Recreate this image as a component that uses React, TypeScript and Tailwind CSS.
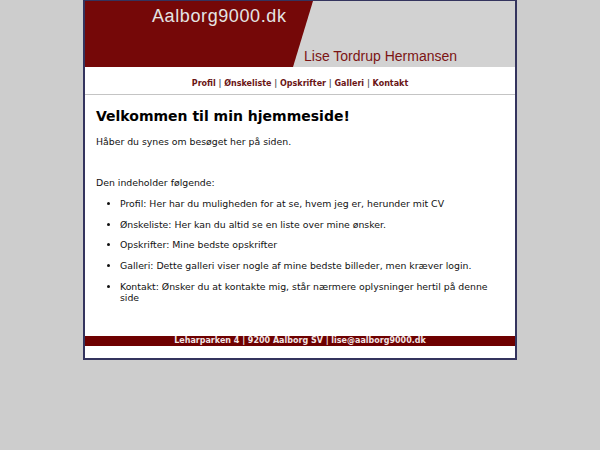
import React from "react";

const menu = ["Profil", "Ønskeliste", "Opskrifter", "Galleri", "Kontakt"];

const items = [
  "Profil: Her har du muligheden for at se, hvem jeg er, herunder mit CV",
  "Ønskeliste: Her kan du altid se en liste over mine ønsker.",
  "Opskrifter: Mine bedste opskrifter",
  "Galleri: Dette galleri viser nogle af mine bedste billeder, men kræver login.",
  "Kontakt: Ønsker du at kontakte mig, står nærmere oplysninger hertil på denne side",
];

const Banner = () => (
  <div className="relative h-[66px] bg-[#d2d2d2] overflow-hidden">
    {/* diagonal red field */}
    <svg className="absolute inset-0" width="430" height="66" viewBox="0 0 430 66">
      <polygon points="0,0 228,0 208,66 0,66" fill="#750808" />
    </svg>
    <div className="relative flex flex-col h-full">
      <div className="pl-[67px] pt-[4px] text-[18px] leading-[22px] text-[#e4e4e4] tracking-[0.6px]">
        Aalborg9000.dk
      </div>
      <div className="mt-auto pl-[219px] pb-[2px] text-[14px] leading-[18px] text-[#7c1414]">
        Lise Tordrup Hermansen
      </div>
    </div>
  </div>
);

export default function App() {
  return (
    <div className="min-h-[450px] bg-[#cdcdcd] font-['DejaVu_Sans',Verdana,sans-serif]">
      <div className="mx-auto w-[434px] border-2 border-t-[1px] border-[#34345e] bg-white">
        <div className="font-['Liberation_Sans',Arial,sans-serif]">
          <Banner />
        </div>

        <nav className="h-[28px] flex items-center justify-center pt-[6px] border-b border-[#c4c4c4] text-[8px] font-bold text-[#6a1515] whitespace-pre">
          {menu.map((m, i) => (
            <span key={m}>
              {i > 0 && <span className="text-[#555]">{" | "}</span>}
              {m}
            </span>
          ))}
        </nav>

        <div className="px-[11px] pt-[12px] pb-[33px] text-[9.33px] leading-[11px] text-[#111]">
          <h1 className="text-[14px] leading-[18px] font-bold text-black">
            Velkommen til min hjemmeside!
          </h1>
          <p className="mt-[11px]">Håber du synes om besøget her på siden.</p>
          <p className="mt-[30px]">Den indeholder følgende:</p>
          <ul className="mt-[10px] pl-[24px] list-disc flex flex-col gap-[9.7px]">
            {items.map((t) => (
              <li key={t}>{t}</li>
            ))}
          </ul>
        </div>

        <div className="h-[10px] bg-[#6e0000] flex items-center justify-center text-[8px] font-bold text-[#f2e6e6]">
          Leharparken 4 | 9200 Aalborg SV | lise@aalborg9000.dk
        </div>
        <div className="h-[12px]" />
      </div>
    </div>
  );
}
